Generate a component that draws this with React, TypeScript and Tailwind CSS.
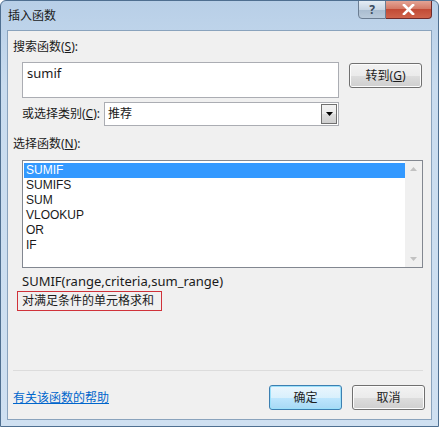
import React from "react"

const font = { fontFamily: '"Noto Sans", "Noto Sans CJK SC", sans-serif' }

const functions = ["SUMIF", "SUMIFS", "SUM", "VLOOKUP", "OR", "IF"]

function WinButton({ children, focused }: { children: React.ReactNode; focused?: boolean }) {
  return (
    <button
      className={
        "h-[25px] w-[73px] rounded-[3px] border text-[12px] text-[#1e1e1e] " +
        (focused
          ? "border-[#3c7fb1] bg-[linear-gradient(#eaf6fd_0%,#d9f0fc_50%,#bee6fd_51%,#a7d9f5_100%)] shadow-[inset_0_0_0_1px_#9ce0fa]"
          : "border-[#707070] bg-[linear-gradient(#f2f2f2_0%,#ebebeb_50%,#dddddd_51%,#cfcfcf_100%)] shadow-[inset_0_0_0_1px_#fcfcfc]")
      }
    >
      {children}
    </button>
  )
}

export default function App() {
  return (
    <div
      style={font}
      className="flex h-[427px] w-[439px] flex-col overflow-hidden rounded-t-[6px] border border-[#4f6f90] bg-[linear-gradient(180deg,#b8cfe7_0%,#c9dcef_20%,#cfe0f1_100%)]"
    >
      {/* title bar */}
      <div className="relative h-[29px] shrink-0">
        <div className="pl-[7px] pt-[6px] text-[12px] text-[#1a1a1a]">插入函数</div>
        <div className="absolute right-[6px] top-[-1px] flex">
          <div className="flex h-[19px] w-[28px] items-center justify-center rounded-bl-[4px] border border-[#6b7d92] bg-[linear-gradient(#e4ecf4_0%,#c8d6e4_50%,#a9bccf_51%,#b9cadb_100%)] text-[12px] font-bold leading-none text-[#3a4a5c]">
            ?
          </div>
          <div className="flex h-[19px] w-[46px] items-center justify-center rounded-br-[4px] border border-l-0 border-[#6f2b2b] bg-[linear-gradient(#e3a495_0%,#d47a66_45%,#c24b36_50%,#cf634b_100%)]">
            <svg width="13" height="11" viewBox="0 0 13 11">
              <path d="M2 1 L11 10 M11 1 L2 10" stroke="#ffffff" strokeWidth="2.6" strokeLinecap="square" />
            </svg>
          </div>
        </div>
      </div>

      {/* client area */}
      <div className="mx-[6px] flex flex-1 flex-col border border-[#8aa3bd] bg-[#f0f0f0] text-[12px] text-[#1a1a1a]">
        <div className="pl-[5px] pt-[8px] leading-[16px]">
          搜索函数(<span className="underline">S</span>):
        </div>

        <div className="ml-[14px] mt-[7px] flex gap-[10px]">
          <div className="h-[36px] w-[317px] border border-[#abadb3] bg-white px-[4px] pt-[2px] text-[13px] leading-[16px]">
            sumif
          </div>
          <div className="pt-[1px]">
            <WinButton>
              转到(<span className="underline">G</span>)
            </WinButton>
          </div>
        </div>

        <div className="ml-[14px] mt-[4px] flex items-center">
          <div className="w-[82px] leading-[16px]">
            或选择类别(<span className="underline">C</span>):
          </div>
          <div className="flex h-[24px] w-[235px] items-center justify-between border border-[#abadb3] bg-white pl-[3px] pr-[1px]">
            <span>推荐</span>
            <div className="flex h-[20px] w-[16px] items-center justify-center border border-[#707070] bg-[linear-gradient(#f2f2f2_0%,#ebebeb_50%,#dddddd_51%,#cfcfcf_100%)]">
              <svg width="7" height="4" viewBox="0 0 7 4">
                <path d="M0 0 H7 L3.5 4 Z" fill="#000" />
              </svg>
            </div>
          </div>
        </div>

        <div className="mt-[10px] pl-[5px] leading-[16px]">
          选择函数(<span className="underline">N</span>):
        </div>

        <div className="ml-[14px] mt-[8px] flex h-[108px] w-[401px] border border-[#828790] bg-white">
          <div className="flex-1 pl-[1px] pt-[2px] font-['Liberation_Sans',sans-serif]">
            {functions.map((f, i) => (
              <div
                key={f}
                className={
                  "h-[15px] pl-[2px] text-[12px] leading-[15px] " +
                  (i === 0 ? "bg-[#3399ff] text-white" : "text-[#1a1a1a]")
                }
              >
                {f}
              </div>
            ))}
          </div>
          <div className="flex w-[17px] flex-col items-center justify-between bg-[#f0f0f0] py-[6px]">
            <svg width="7" height="4" viewBox="0 0 7 4">
              <path d="M0 4 H7 L3.5 0 Z" fill="#c2c2c2" />
            </svg>
            <svg width="7" height="4" viewBox="0 0 7 4">
              <path d="M0 0 H7 L3.5 4 Z" fill="#c2c2c2" />
            </svg>
          </div>
        </div>

        <div className="ml-[14px] mt-[5px] text-[13px] leading-[16px]">SUMIF(range,criteria,sum_range)</div>

        <div className="ml-[9px] mt-[2px] flex h-[20px] w-[145px] items-center border border-[#d0323a] pl-[4px] leading-[16px]">
          对满足条件的单元格求和
        </div>

        <div className="flex-1" />

        <div className="ml-[5px] h-px w-[410px] bg-[#dcdcdc]" />

        <div className="ml-[5px] mr-[6px] mt-[14px] mb-[9px] flex items-center">
          <a className="flex-1 cursor-pointer text-[#0066cc] underline">有关该函数的帮助</a>
          <div className="flex gap-[10px]">
            <WinButton focused>确定</WinButton>
            <WinButton>取消</WinButton>
          </div>
        </div>
      </div>

      <div className="h-[6px] shrink-0" />
    </div>
  )
}
